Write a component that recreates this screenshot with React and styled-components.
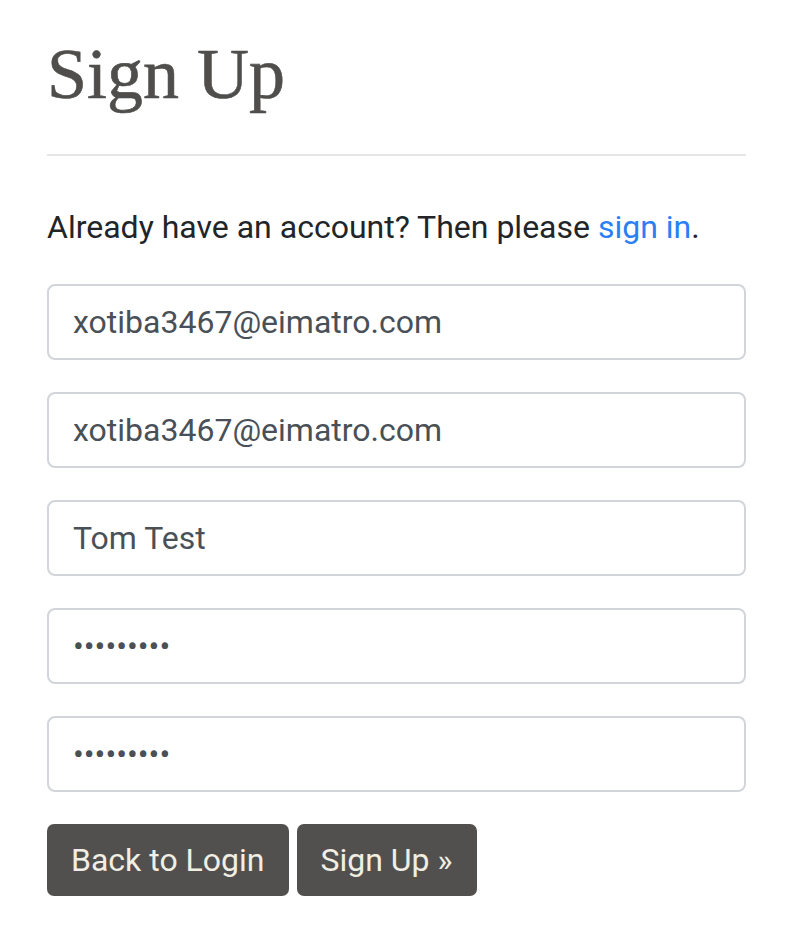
import React from "react";
import styled, { createGlobalStyle } from "styled-components";

const Global = createGlobalStyle`
  html, body { margin: 0; padding: 0; background: #fff; }
  body { font-family: Roboto, "Liberation Sans", sans-serif; color: #212529; }
`;

const Page = styled.div`
  width: 699px;
  padding: 31px 0 0 47px;
`;

const Title = styled.h1`
  margin: 0;
  font-family: "Liberation Serif", serif;
  font-weight: 400;
  font-size: 72px;
  line-height: 1.2;
  color: #4f4e4c;
  -webkit-text-stroke: 0.6px #4f4e4c;
`;

const Rule = styled.hr`
  margin: 37px 0 0;
  border: 0;
  border-top: 2px solid #e6e6e6;
`;

const Lead = styled.p`
  margin: 47px 0 0;
  font-size: 32px;
  line-height: 1.5;
  color: #212529;
`;

const Link = styled.a`
  color: #2b7ff6;
  text-decoration: none;
`;

const Form = styled.form`
  margin-top: 33px;
  display: flex;
  flex-direction: column;
  gap: 32px;
`;

const Input = styled.input`
  box-sizing: border-box;
  width: 100%;
  height: 76px;
  padding: 0 24px;
  border: 2px solid #d2d5d9;
  border-radius: 8px;
  font-family: Roboto, "Liberation Sans", sans-serif;
  font-size: 32px;
  color: #495057;
  background: #fff;
  outline: none;
`;

const Actions = styled.div`
  display: flex;
  gap: 8px;
`;

const Button = styled.button`
  height: 72px;
  padding: 0 24px;
  border: 0;
  border-radius: 7px;
  background: #51504e;
  color: #f1eee4;
  font-family: Roboto, "Liberation Sans", sans-serif;
  font-size: 32px;
  cursor: pointer;
`;

export default function App() {
  return (
    <>
      <Global />
      <Page>
        <Title>Sign Up</Title>
        <Rule />
        <Lead>
          Already have an account? Then please <Link href="#">sign in</Link>.
        </Lead>
        <Form onSubmit={(e) => e.preventDefault()}>
          <Input type="email" defaultValue="xotiba3467@eimatro.com" />
          <Input type="email" defaultValue="xotiba3467@eimatro.com" />
          <Input type="text" defaultValue="Tom Test" />
          <Input type="password" defaultValue="123456789" />
          <Input type="password" defaultValue="123456789" />
          <Actions>
            <Button type="button">Back to Login</Button>
            <Button type="submit">Sign Up »</Button>
          </Actions>
        </Form>
      </Page>
    </>
  );
}
